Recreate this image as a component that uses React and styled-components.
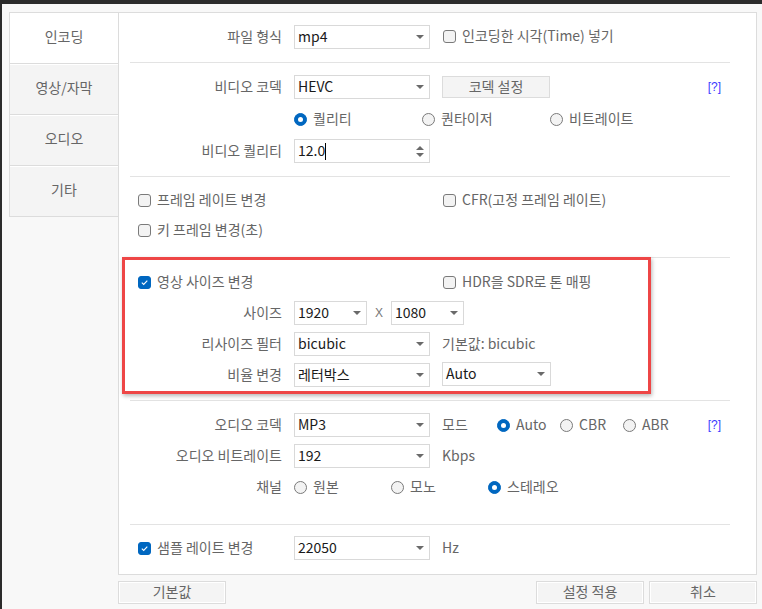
import React from 'react';
import styled, { createGlobalStyle } from 'styled-components';

const GlobalStyle = createGlobalStyle`
  html, body {
    margin: 0;
    padding: 0;
  }
  body {
    font-family: "Noto Sans CJK KR", "Noto Sans", sans-serif;
    font-size: 14px;
    color: #666;
    background: #f8f8f8;
  }
`;

const Window = styled.div`
  width: 762px;
  height: 609px;
  box-sizing: border-box;
  border-top: 4px solid #2b2b2b;
  border-left: 2px solid #2b2b2b;
  padding: 8px 0 0 7px;
  display: flex;
  background: #f8f8f8;
  overflow: hidden;
`;

const TabList = styled.div`
  width: 109px;
  display: flex;
  flex-direction: column;
  flex-shrink: 0;
`;

const Tab = styled.div`
  height: 51px;
  box-sizing: border-box;
  padding-bottom: 4px;
  border: 1px solid #dcdcdc;
  border-right: none;
  border-bottom: none;
  background: ${(p) => (p.$active ? '#fff' : '#f4f4f4')};
  box-shadow: ${(p) => (p.$active ? 'none' : 'inset 0 1px 0 #fff')};
  display: flex;
  align-items: center;
  justify-content: center;
  &:last-child {
    height: 52px;
    border-bottom: 1px solid #dcdcdc;
  }
`;

const Main = styled.div`
  display: flex;
  flex-direction: column;
`;

const Panel = styled.div`
  position: relative;
  width: 639px;
  box-sizing: border-box;
  border: 1px solid #dcdcdc;
  background: #fff;
`;

const Section = styled.div`
  margin: 0 26px 0 11px;
  padding: ${(p) => p.$pt}px 0 ${(p) => p.$pb}px;
  border-top: ${(p) => (p.$first ? 'none' : '1px solid #e3e3e3')};
  display: flex;
  flex-direction: column;
  gap: ${(p) => p.$gap || 7}px;
`;

const Row = styled.div`
  display: flex;
  align-items: center;
  height: ${(p) => p.$h || 24}px;
`;

const Label = styled.div`
  width: 152px;
  margin-right: 12px;
  padding-bottom: 2px;
  text-align: right;
  flex-shrink: 0;
  white-space: nowrap;
`;

const CheckCell = styled.div`
  width: ${(p) => p.$w}px;
  padding-left: ${(p) => p.$pl || 0}px;
  box-sizing: border-box;
  flex-shrink: 0;
  display: flex;
  align-items: center;
  white-space: nowrap;
`;

const Text = styled.span`
  padding-bottom: 2px;
`;

const Field = styled.div`
  position: relative;
  width: ${(p) => p.$w}px;
  height: 24px;
  box-sizing: border-box;
  border: 1px solid #d9d9d9;
  background: #fff;
  color: #1a1a1a;
  padding-left: 3px;
  line-height: 20px;
  flex-shrink: 0;
  white-space: nowrap;
`;

const Arrow = styled.span`
  position: absolute;
  right: 5px;
  top: ${(p) => p.$top || 9}px;
  width: 0;
  height: 0;
  border-left: 4px solid transparent;
  border-right: 4px solid transparent;
  ${(p) => (p.$up ? 'border-bottom' : 'border-top')}: 4px solid #6a6a6a;
`;

const Caret = styled.span`
  display: inline-block;
  width: 1px;
  height: 17px;
  background: #000;
  vertical-align: -4px;
`;

const Extra = styled.div`
  margin-left: 12px;
  padding-bottom: 2px;
  white-space: nowrap;
  width: ${(p) => (p.$w ? `${p.$w}px` : 'auto')};
  flex-shrink: 0;
`;

const Times = styled.span`
  width: 24px;
  text-align: center;
  color: #777;
  font-family: "Liberation Sans", sans-serif;
  font-size: 12px;
`;

const Box = styled.span`
  width: 13px;
  height: 13px;
  box-sizing: border-box;
  margin-left: 1px;
  margin-right: 6px;
  border-radius: 3px;
  border: 1px solid ${(p) => (p.$on ? '#0067c0' : '#7a7a7a')};
  background: ${(p) => (p.$on ? '#0067c0' : '#f3f3f3')};
  display: inline-flex;
  align-items: center;
  justify-content: center;
  flex-shrink: 0;
`;

const RadioDot = styled.span`
  width: 13px;
  height: 13px;
  box-sizing: border-box;
  margin-right: 6px;
  border-radius: 50%;
  border: 1px solid ${(p) => (p.$on ? '#0067c0' : '#7a7a7a')};
  background: ${(p) => (p.$on ? '#0067c0' : '#f3f3f3')};
  display: inline-flex;
  align-items: center;
  justify-content: center;
  flex-shrink: 0;
  &::after {
    content: '';
    display: ${(p) => (p.$on ? 'block' : 'none')};
    width: 5px;
    height: 5px;
    border-radius: 50%;
    background: #fff;
  }
`;

const RadioItem = styled.div`
  width: ${(p) => p.$w}px;
  display: flex;
  align-items: center;
  flex-shrink: 0;
  white-space: nowrap;
`;

const CodecButton = styled.div`
  margin-left: 12px;
  width: 108px;
  height: 22px;
  box-sizing: border-box;
  border: 1px solid #dcdcdc;
  background: #f4f4f4;
  text-align: center;
  line-height: 18px;
`;

const Help = styled.span`
  margin-left: auto;
  margin-right: 9px;
  color: #3b3bff;
  font-family: "Liberation Sans", sans-serif;
  font-size: 12px;
`;

const Highlight = styled.div`
  position: absolute;
  left: 3px;
  top: 244px;
  width: 529px;
  height: 137px;
  box-sizing: border-box;
  border: 3px solid #ee4646;
  box-shadow: 1px 2px 4px rgba(0, 0, 0, 0.28);
  pointer-events: none;
`;

const Footer = styled.div`
  width: 639px;
  margin-top: 6px;
  display: flex;
  justify-content: space-between;
`;

const ButtonGroup = styled.div`
  display: flex;
  gap: 5px;
`;

const FootButton = styled.div`
  width: 108px;
  height: 23px;
  box-sizing: border-box;
  border: 1px solid #dcdcdc;
  box-shadow: inset 0 0 0 1px #fff;
  background: #f4f4f4;
  text-align: center;
  line-height: 19px;
`;

const Check = ({ on, children }) => (
  <>
    <Box $on={on}>
      {on && (
        <svg width="9" height="9" viewBox="0 0 9 9">
          <path d="M1.8 4.6 L3.7 6.4 L7.3 2.6" fill="none" stroke="#fff" strokeWidth="1.1" />
        </svg>
      )}
    </Box>
    <Text>{children}</Text>
  </>
);

const Radio = ({ on, w, children }) => (
  <RadioItem $w={w}>
    <RadioDot $on={on} />
    <Text>{children}</Text>
  </RadioItem>
);

const Select = ({ w, children }) => (
  <Field $w={w}>
    {children}
    <Arrow />
  </Field>
);

const tabs = ['인코딩', '영상/자막', '오디오', '기타'];

export default function App() {
  return (
    <>
      <GlobalStyle />
      <Window>
        <TabList>
          {tabs.map((t, i) => (
            <Tab key={t} $active={i === 0}>{t}</Tab>
          ))}
        </TabList>
        <Main>
          <Panel>
            <Section $first $pt={12} $pb={13}>
              <Row>
                <Label>파일 형식</Label>
                <Select w={136}>mp4</Select>
                <Extra>
                  <CheckCell $w={200}>
                    <Check>인코딩한 시각(Time) 넣기</Check>
                  </CheckCell>
                </Extra>
              </Row>
            </Section>

            <Section $pt={12} $pb={13}>
              <Row>
                <Label>비디오 코덱</Label>
                <Select w={136}>HEVC</Select>
                <CodecButton>코덱 설정</CodecButton>
                <Help>[?]</Help>
              </Row>
              <Row $h={26}>
                <Label />
                <Radio on w={128}>퀄리티</Radio>
                <Radio w={128}>퀀타이저</Radio>
                <Radio w={128}>비트레이트</Radio>
              </Row>
              <Row>
                <Label>비디오 퀄리티</Label>
                <Field $w={136}>
                  12.0<Caret />
                  <Arrow $up $top={6} />
                  <Arrow $top={13} />
                </Field>
              </Row>
            </Section>

            <Section $pt={11} $pb={15} $gap={6}>
              <Row>
                <CheckCell $w={312} $pl={7}>
                  <Check>프레임 레이트 변경</Check>
                </CheckCell>
                <CheckCell $w={220}>
                  <Check>CFR(고정 프레임 레이트)</Check>
                </CheckCell>
              </Row>
              <Row>
                <CheckCell $w={312} $pl={7}>
                  <Check>키 프레임 변경(초)</Check>
                </CheckCell>
              </Row>
            </Section>

            <Section $pt={12} $pb={13}>
              <Row>
                <CheckCell $w={312} $pl={7}>
                  <Check on>영상 사이즈 변경</Check>
                </CheckCell>
                <CheckCell $w={220}>
                  <Check>HDR을 SDR로 톤 매핑</Check>
                </CheckCell>
              </Row>
              <Row>
                <Label>사이즈</Label>
                <Select w={73}>1920</Select>
                <Times>X</Times>
                <Select w={73}>1080</Select>
              </Row>
              <Row>
                <Label>리사이즈 필터</Label>
                <Select w={136}>bicubic</Select>
                <Extra>기본값: bicubic</Extra>
              </Row>
              <Row>
                <Label>비율 변경</Label>
                <Select w={136}>레터박스</Select>
                <Extra>
                  <Select w={109}>Auto</Select>
                </Extra>
              </Row>
            </Section>

            <Section $pt={12} $pb={25}>
              <Row>
                <Label>오디오 코덱</Label>
                <Select w={136}>MP3</Select>
                <Extra $w={55}>모드</Extra>
                <Radio on w={63}>Auto</Radio>
                <Radio w={63}>CBR</Radio>
                <Radio w={63}>ABR</Radio>
                <Help>[?]</Help>
              </Row>
              <Row>
                <Label>오디오 비트레이트</Label>
                <Select w={136}>192</Select>
                <Extra>Kbps</Extra>
              </Row>
              <Row>
                <Label>채널</Label>
                <Radio w={97}>원본</Radio>
                <Radio w={97}>모노</Radio>
                <Radio on w={97}>스테레오</Radio>
              </Row>
            </Section>

            <Section $pt={11} $pb={14}>
              <Row>
                <CheckCell $w={164} $pl={7}>
                  <Check on>샘플 레이트 변경</Check>
                </CheckCell>
                <Select w={136}>22050</Select>
                <Extra>Hz</Extra>
              </Row>
            </Section>

            <Highlight />
          </Panel>
          <Footer>
            <FootButton>기본값</FootButton>
            <ButtonGroup>
              <FootButton>설정 적용</FootButton>
              <FootButton>취소</FootButton>
            </ButtonGroup>
          </Footer>
        </Main>
      </Window>
    </>
  );
}
